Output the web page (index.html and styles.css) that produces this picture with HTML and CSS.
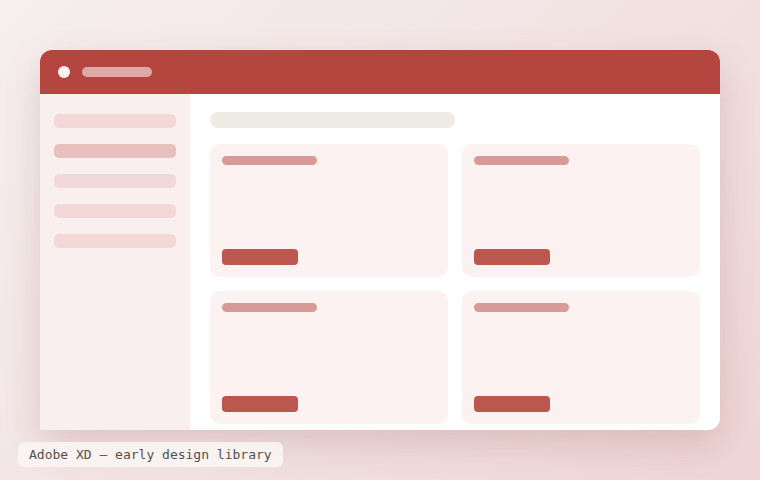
FILE: index.html
```html
<!DOCTYPE html>
<html>
<head>
<meta charset="utf-8">
<link rel="stylesheet" href="styles.css">
</head>
<body>
<div class="stage">
  <div class="window">
    <div class="titlebar">
      <span class="dot"></span>
      <span class="title"></span>
    </div>
    <div class="body">
      <aside class="sidebar">
        <div class="nav"></div>
        <div class="nav active"></div>
        <div class="nav"></div>
        <div class="nav"></div>
        <div class="nav"></div>
      </aside>
      <main class="main">
        <div class="search"></div>
        <div class="grid">
          <div class="card"><div class="card-title"></div><div class="card-btn"></div></div>
          <div class="card"><div class="card-title"></div><div class="card-btn"></div></div>
          <div class="card"><div class="card-title"></div><div class="card-btn"></div></div>
          <div class="card"><div class="card-title"></div><div class="card-btn"></div></div>
        </div>
      </main>
    </div>
  </div>
  <div class="caption">Adobe XD — early design library</div>
</div>
</body>
</html>
```
FILE: styles.css
```css
html, body { margin: 0; padding: 0; }
body {
  width: 760px;
  height: 480px;
  overflow: hidden;
  background: linear-gradient(135deg, #f6efee 0%, #f2e2e2 55%, #efd5d5 100%);
  font-family: "DejaVu Sans Mono", monospace;
}
.stage {
  padding: 50px 40px 0 40px;
  display: flex;
  flex-direction: column;
}
.window {
  width: 680px;
  height: 380px;
  border-radius: 12px;
  background: #ffffff;
  box-shadow: 0 14px 36px rgba(120, 50, 50, 0.18);
  display: flex;
  flex-direction: column;
}
.titlebar {
  height: 44px;
  flex: none;
  background: #b4463f;
  border-radius: 12px 12px 0 0;
  display: flex;
  align-items: center;
  padding-left: 18px;
  gap: 12px;
}
.dot {
  width: 12px;
  height: 12px;
  border-radius: 50%;
  background: #fbf2f1;
}
.title {
  width: 70px;
  height: 10px;
  border-radius: 5px;
  background: #dca9a5;
}
.body {
  flex: 1;
  display: flex;
}
.sidebar {
  width: 150px;
  flex: none;
  background: #f9efee;
  padding: 20px 14px 0 14px;
  box-sizing: border-box;
  display: flex;
  flex-direction: column;
  gap: 16px;
}
.nav {
  height: 14px;
  border-radius: 5px;
  background: #f2d8d7;
}
.nav.active { background: #e8c1bf; }
.main {
  flex: 1;
  padding: 18px 20px 0 20px;
  display: flex;
  flex-direction: column;
  gap: 16px;
}
.search {
  width: 245px;
  height: 16px;
  border-radius: 8px;
  background: #efebe5;
}
.grid {
  display: grid;
  grid-template-columns: 238px 238px;
  grid-auto-rows: 133px;
  column-gap: 14px;
  row-gap: 14px;
}
.card {
  background: #fcf2f1;
  border-radius: 10px;
  padding: 12px;
  display: flex;
  flex-direction: column;
  justify-content: space-between;
}
.card-title {
  width: 95px;
  height: 9px;
  border-radius: 4.5px;
  background: #d89a96;
}
.card-btn {
  width: 76px;
  height: 16px;
  border-radius: 4px;
  background: #bb574f;
}
.caption {
  align-self: flex-start;
  margin: 12px 0 0 -22px;
  height: 25px;
  box-sizing: border-box;
  padding: 0 11px;
  display: flex;
  align-items: center;
  background: rgba(250, 247, 245, 0.85);
  border-radius: 6px;
  font-size: 13px;
  color: #555049;
  white-space: nowrap;
}
```
